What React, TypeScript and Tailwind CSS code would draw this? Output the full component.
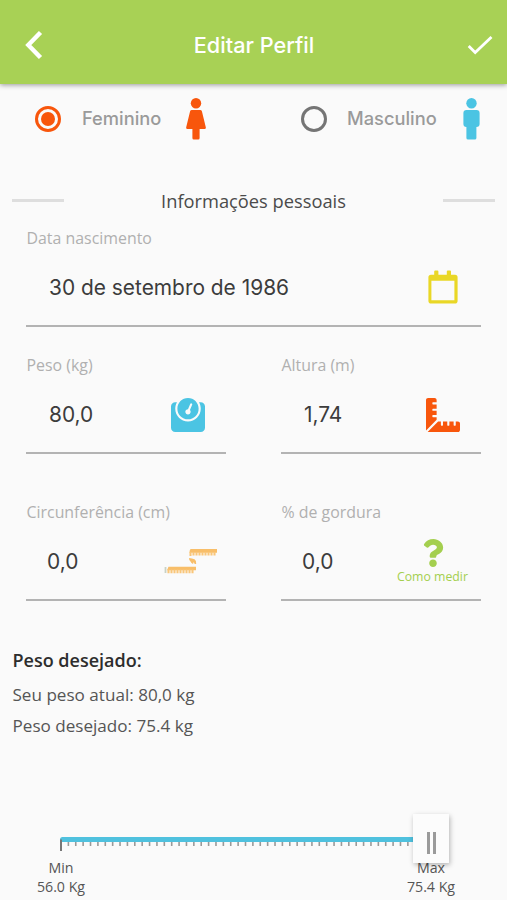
import React, { useState } from "react";
import { FaQuestion, FaRulerCombined, FaWeight } from "react-icons/fa";

type Gender = "F" | "M";

const TICK_COUNT = 50;
const TICK_GAP = 7.38;

interface FieldProps {
  label: string;
  value: string;
  valueClass?: string;
  children: React.ReactNode;
}

function Field({ label, value, valueClass = "", children }: FieldProps) {
  return (
    <div className="border-b-2 border-[#b3b3b3]">
      <div className="h-5 pl-[0.5px] text-[15.9px] leading-5 text-[#b0b0b0] whitespace-nowrap">{label}</div>
      <div className="flex h-[77px] items-center justify-between pl-[23px]">
        <span className={`pt-[2px] font-['Inter',sans-serif] text-[20.9px] text-[#3c3c3c] whitespace-nowrap ${valueClass}`}>
          {value}
        </span>
        {children}
      </div>
    </div>
  );
}

function Radio({ checked, onClick }: { checked: boolean; onClick: () => void }) {
  return (
    <button
      onClick={onClick}
      className={`flex h-[26px] w-[26px] shrink-0 items-center justify-center rounded-full border-3 ${
        checked ? "border-[#f8560c]" : "border-[#757575]"
      }`}
    >
      {checked && <span className="h-[14px] w-[14px] rounded-full bg-[#f8560c]" />}
    </button>
  );
}

function WomanIcon() {
  return (
    <svg width="20" height="42" viewBox="0 0 20 42" fill="#f8560c">
      <circle cx="10" cy="5.2" r="5.2" />
      <path d="M5.8 12h8.400q1.300 0 1.700 1.300l3.900 16q.3 1.700-1.200 1.700H13.600v9q0 1.600-1.400 1.600H7.800q-1.400 0-1.400-1.600v-9H1.400Q-.1 31 .2 29.300l3.900-16Q4.500 12 5.800 12z" />
    </svg>
  );
}

function ManIcon() {
  return (
    <svg width="17" height="42" viewBox="0 0 17 42" fill="#4bc4e3">
      <circle cx="8.500" cy="5.200" r="5.200" />
      <path d="M3.500 12h10Q16.600 12 16.600 15v11q0 3-3.200 3v11q0 1.600-1.700 1.600H5.100q-1.700 0-1.700-1.600V29Q.4 29 .4 26V15q0-3 3.100-3z" />
    </svg>
  );
}

function CalendarIcon() {
  return (
    <svg width="30" height="34" viewBox="0 0 30 34" fill="#e9d726">
      <path d="M6.200 1.500q0-1 1-1h2.200q1 0 1 1v4H6.200zM18.800 1.500q0-1 1-1H22q1 0 1 1v4h-4.200z" />
      <path
        fillRule="evenodd"
        d="M3 4.800h24q2.600 0 2.600 2.600v23.300q0 2.800-2.600 2.800H3Q.4 33.500.4 30.700V7.400Q.4 4.800 3 4.800zM3.400 10.800v19.500h23V10.800z"
      />
    </svg>
  );
}

function TapeIcon() {
  return (
    <svg width="54" height="26" viewBox="0 0 54 26" fill="none">
      <path d="M27 1h26v3.800H25.500q0-3.800 1.500-3.800zM4.500 18.800H32v3.400H3z" fill="#f8be69" />
      <path
        d="M26.500 4v4M29.500 4v3.500M32.500 4v3.500M35.500 4v3.500M38.500 4v3.500M41.500 4v3.500M44.500 4v3.500M47.500 4v3.500M50.500 4v3.500"
        stroke="#f9c67a"
        strokeWidth="2.1"
      />
      <path
        d="M4.500 21.500v3.700M7.500 21.500v3.700M10.500 21.500v3.700M13.500 21.500v3.700M16.500 21.500v3.700M19.500 21.500v3.700M22.500 21.500v3.700M25.500 21.500v3.700M28.500 21.500v3.700"
        stroke="#f9c67a"
        strokeWidth="2.1"
      />
      <path d="M25 10q3 .5 5.500 1.200 2 1.300 1.700 4.800h-1.500l-1-2-.7 2-1.500-1-1-1.500q-1.500-.5-1.500-3.500z" fill="#f8be69" />
      <path d="M1.500 19v6" stroke="#c9d2c4" strokeWidth="1.8" />
    </svg>
  );
}

export default function App() {
  const [gender, setGender] = useState<Gender>("F");

  return (
    <div className="h-[900px] w-[507px] overflow-hidden bg-[#fafafa] font-['Open_Sans',sans-serif]">
      {/* HEADER */}
      <header className="relative flex h-[84px] items-center justify-between bg-[#a8d155] pr-[14px] pl-[25px] pt-[6px] shadow-[0_1px_5px_rgba(0,0,0,0.4)]">
        <svg width="18" height="28" viewBox="0 0 18 28" fill="none" stroke="#fff" strokeWidth="4.4">
          <path d="M15.500 1.500L3.300 14 15.500 26.500" />
        </svg>
        <h1 className="-ml-[2px] font-['Inter',sans-serif] text-[21.7px] font-medium text-white">Editar Perfil</h1>
        <svg width="26" height="20" viewBox="0 0 26 20" fill="none" stroke="#fff" strokeWidth="2.8">
          <path d="M1.700 11l6.500 6.500L24.500 2" />
        </svg>
      </header>

      {/* GENDER */}
      <div className="flex h-[69px] items-center pl-[35px] font-['Inter',sans-serif] text-[18.3px] font-medium text-[#9a9a9a]">
        <div className="flex w-[266px] items-center">
          <Radio checked={gender === "F"} onClick={() => setGender("F")} />
          <span className="ml-[21px] w-[104px] pt-px">Feminino</span>
          <WomanIcon />
        </div>
        <Radio checked={gender === "M"} onClick={() => setGender("M")} />
        <span className="ml-[20px] w-[116px] pt-px">Masculino</span>
        <ManIcon />
      </div>

      {/* PERSONAL INFO */}
      <div className="mt-[32px] flex h-[30px] items-center justify-between px-3">
        <span className="h-[3px] w-[52px] bg-[#dedede]" />
        <h2 className="pt-px text-[18.3px] text-[#4b4b4b]">Informações pessoais</h2>
        <span className="h-[3px] w-[52px] bg-[#dedede]" />
      </div>

      <div className="mt-[13px] px-[26px]">
        <Field label="Data nascimento" value="30 de setembro de 1986">
          <div className="mr-[23px]">
            <CalendarIcon />
          </div>
        </Field>

        <div className="mt-7 grid grid-cols-2 gap-[55px]">
          <Field label="Peso (kg)" value="80,0">
            <FaWeight className="mt-[2px] mr-[21px] h-[34px] w-[34px] text-[#4bc4e3]" />
          </Field>
          <Field label="Altura (m)" value="1,74">
            <FaRulerCombined className="mt-[2px] mr-[21px] h-[34px] w-[34px] text-[#f8560c]" />
          </Field>
        </div>

        <div className="mt-[48px] grid grid-cols-2 gap-[55px]">
          <Field label="Circunferência (cm)" value="0,0" valueClass="-ml-[2px]">
            <div className="mr-[8px]">
              <TapeIcon />
            </div>
          </Field>
          <Field label="% de gordura" value="0,0" valueClass="-ml-[2px]">
            <button className="mr-[13px] flex flex-col items-center pt-[3px] text-[#a4cf4f]">
              <FaQuestion className="ml-[2px] h-[28px] w-[22px]" />
              <span className="mt-px text-[12.3px] leading-[18px]">Como medir</span>
            </button>
          </Field>
        </div>
      </div>

      {/* TARGET WEIGHT */}
      <div className="mt-[44px] px-[12.5px] text-[17.1px] leading-[30px] text-[#555]">
        <h3 className="text-[18px] font-semibold text-[#2d2d2d]">Peso desejado:</h3>
        <p className="mt-[5px]">Seu peso atual: 80,0 kg</p>
        <p className="pt-px">Peso desejado: 75.4 kg</p>
      </div>

      <div className="relative mt-[96px] ml-[60px] w-[371px]">
        <div className="h-[5px] rounded-l-sm bg-[#4fc1de]" />
        <svg width="371" height="14" viewBox="0 0 371 14" className="-mt-[4px] block">
          <path d="M1 1.500v11.500" stroke="#777" strokeWidth="2" />
          {Array.from({ length: TICK_COUNT - 1 }, (_, i) => (
            <path key={i} d={`M${1 + (i + 1) * TICK_GAP} 4v4`} stroke="#999" strokeWidth="1.6" />
          ))}
        </svg>
        <div className="mt-[6px] flex justify-between text-center text-[14.2px] leading-[19px] text-[#555]">
          <div className="-ml-[34px] w-[70px]">
            <div>Min</div>
            <div>56.0 Kg</div>
          </div>
          <div className="-mr-[35px] w-[70px]">
            <div>Max</div>
            <div>75.4 Kg</div>
          </div>
        </div>
        <div className="absolute -top-[23px] left-[353px] flex h-[49px] w-[36px] items-center justify-center gap-[3px] bg-[#fcfcfc] pt-[8px] shadow-[1px_2px_5px_rgba(0,0,0,0.28)]">
          <span className="h-[22px] w-[3px] bg-[#9b9b9b]" />
          <span className="h-[22px] w-[3px] bg-[#9b9b9b]" />
        </div>
      </div>
    </div>
  );
}
